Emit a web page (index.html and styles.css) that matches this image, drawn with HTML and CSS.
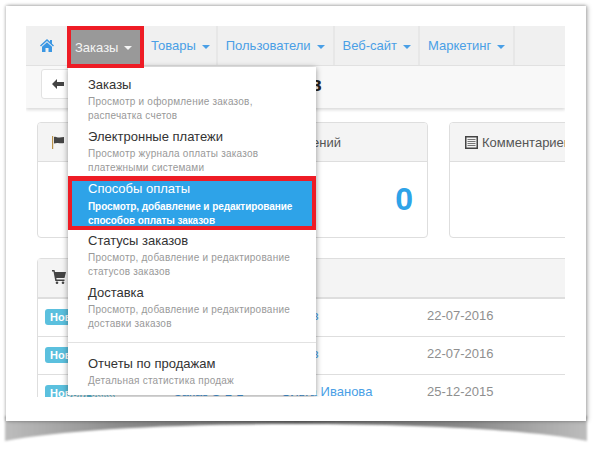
FILE: index.html
```html
<!DOCTYPE html>
<html lang="ru">
<head>
<meta charset="utf-8">
<title>Заказы</title>
<link rel="stylesheet" href="styles.css">
</head>
<body>
<svg class="curl" width="600" height="450" viewBox="0 0 600 450" aria-hidden="true">
  <defs>
    <filter id="soft" x="-5%" y="-20%" width="110%" height="140%"><feGaussianBlur stdDeviation="1.2"/></filter>
    <linearGradient id="fade" x1="0" y1="0" x2="1" y2="0">
      <stop offset="0" stop-color="#bdbdbd"/>
      <stop offset="0.2" stop-color="#8c8c8c"/>
      <stop offset="0.5" stop-color="#666"/>
      <stop offset="0.8" stop-color="#8c8c8c"/>
      <stop offset="1" stop-color="#bdbdbd"/>
    </linearGradient>
  </defs>
  <path d="M5 416 L5 441 C60 430 170 424 296 424 C422 424 532 430 587 441 L587 416 Z" fill="url(#fade)" filter="url(#soft)"/>
</svg>
<main class="sheet">
  <div class="view">
    <nav class="nav">
      <a class="nav-item nav-home"><svg width="14" height="13" viewBox="0 0 14 13"><path d="M7 0 L10 2.800 V1 H12 V4.700 L14 6.600 L13 7.600 L7 2 L1 7.600 L0 6.600 Z M7 3.200 L12 7.800 V13 H8.500 V9 H5.500 V13 H2 V7.800 Z" fill="#3b97e3"/></svg></a>
      <a class="nav-item nav-active">Заказы <i class="caret"></i></a>
      <a class="nav-item nav-first">Товары <i class="caret"></i></a>
      <a class="nav-item">Пользователи <i class="caret"></i></a>
      <a class="nav-item nav-tight">Веб-сайт <i class="caret"></i></a>
      <a class="nav-item">Маркетинг <i class="caret"></i></a>
    </nav>
    <div class="subbar">
      <a class="back"><svg width="12" height="10" viewBox="0 0 12 10"><path d="M5 0 V3 H12 V7 H5 V10 L0 5 Z" fill="#444"/></svg></a>
      <h1 class="title">Список заказов</h1>
    </div>
    <div class="content">
      <section class="cards">
        <article class="card card-wide">
          <header class="card-head"><svg class="ico" width="12" height="13" viewBox="0 0 12 13"><path d="M0 0 H1.200 V13 H0 Z" fill="#b8914a"/><path d="M2 1 C4 0 5.500 2 7.500 1.500 L12 1 V7 C9 8 7 6.500 5 7 L2 7.500 Z" fill="#444"/></svg><span class="card-label">Заказов с утверждением и новых сообщений</span></header>
          <div class="card-body"><span class="count">0</span></div>
        </article>
        <article class="card card-side">
          <header class="card-head"><svg class="ico" width="13" height="13" viewBox="0 0 13 13"><path fill-rule="evenodd" d="M0 0 H13 V13 H0 Z M1.500 1.500 V11.500 H11.500 V1.500 Z" fill="#444"/><path d="M2.500 3 H10.500 V4 H2.500 Z M2.500 5 H10.500 V6 H2.500 Z M2.500 7 H10.500 V8 H2.500 Z M2.500 9 H10.500 V10 H2.500 Z" fill="#777"/></svg><span class="card-label">Комментариев к заказам</span></header>
          <div class="card-body"></div>
        </article>
      </section>
      <section class="orders">
        <header class="orders-head"><svg class="ico" width="14" height="14" viewBox="0 0 14 14"><path d="M0 0 H2.500 L3 2 H14 L12.500 8 H4.300 L4.600 9.500 H12.500 V11 H3.300 L1.500 1.500 H0 Z" fill="#444"/><circle cx="5" cy="12.700" r="1.300" fill="#444"/><circle cx="11" cy="12.700" r="1.300" fill="#444"/></svg></header>
        <div class="row"><span class="badge">Новый заказ</span><a class="link order">Заказ S-1-3</a><a class="link person">Попов</a><span class="date">22-07-2016</span></div>
        <div class="row"><span class="badge">Новый заказ</span><a class="link order">Заказ S-1-2</a><a class="link person">Попов</a><span class="date">22-07-2016</span></div>
        <div class="row"><span class="badge">Новый заказ</span><a class="link order">Заказ S-1-1</a><a class="link person">Ольга Иванова</a><span class="date">25-12-2015</span></div>
      </section>
    </div>
    <ul class="menu">
      <li class="menu-item"><b class="menu-title">Заказы</b><small class="menu-desc">Просмотр и оформление заказов, распечатка счетов</small></li>
      <li class="menu-item"><b class="menu-title">Электронные платежи</b><small class="menu-desc">Просмотр журнала оплаты заказов платежными системами</small></li>
      <li class="menu-item menu-active"><b class="menu-title">Способы оплаты</b><small class="menu-desc">Просмотр, добавление и редактирование способов оплаты заказов</small></li>
      <li class="menu-item"><b class="menu-title">Статусы заказов</b><small class="menu-desc">Просмотр, добавление и редактирование статусов заказов</small></li>
      <li class="menu-item"><b class="menu-title">Доставка</b><small class="menu-desc">Просмотр, добавление и редактирование доставки заказов</small></li>
      <li class="menu-divider"></li>
      <li class="menu-item"><b class="menu-title">Отчеты по продажам</b><small class="menu-desc">Детальная статистика продаж</small></li>
    </ul>
  </div>
</main>
</body>
</html>
```
FILE: styles.css
```css
* { box-sizing: border-box; }
html, body { margin: 0; padding: 0; }
body {
  width: 600px;
  height: 450px;
  overflow: hidden;
  background: #fff;
  font-family: "Liberation Sans", Arial, sans-serif;
  font-size: 13px;
  color: #555;
  position: relative;
}
.curl { position: absolute; left: 0; top: 0; }
.sheet {
  position: relative;
  margin: 6px 0 0 6px;
  width: 580px;
  height: 415px;
  padding: 20px 21px 0 20px;
  background: #fff;
  box-shadow: 2px 0 4px rgba(0, 0, 0, .25), -1px 0 3px rgba(0, 0, 0, .15), 0 -1px 3px rgba(0, 0, 0, .12);
}
.view {
  position: relative;
  width: 539px;
  height: 371px;
  overflow: hidden;
}
.nav {
  display: flex;
  height: 40px;
  background: #f0f0f0;
  border-bottom: 1px solid #e2e2e2;
}
.nav-item {
  display: flex;
  align-items: center;
  gap: 6px;
  padding: 0 8px;
  color: #4a9fe6;
  border-right: 2px solid #e7e7e7;
}
.nav-first { padding: 0 6px 0 7px; }
.nav-tight { padding-right: 7px; }
.nav-home { width: 41px; padding: 0 0 0 14px; border-right: 0; }
.nav-active {
  width: 77px;
  height: 42px;
  padding: 0 0 0 4px;
  background: #999;
  color: #f4f4f4;
  border: 4px solid #ee1c25;
  flex: none;
  position: relative;
  z-index: 3;
}
.caret {
  width: 0;
  height: 0;
  margin-top: 2px;
  border-left: 4px solid transparent;
  border-right: 4px solid transparent;
  border-top: 4px solid currentColor;
}
.subbar {
  display: flex;
  align-items: center;
  height: 42px;
  padding: 0 0 6px 15px;
  background: #f8f8f8;
  box-shadow: 0 2px 3px rgba(0, 0, 0, .14);
  position: relative;
}
.back {
  display: flex;
  align-items: center;
  flex: none;
  width: 60px;
  height: 30px;
  padding-left: 10px;
  background: #fff;
  border: 1px solid #e2e2e2;
  border-radius: 3px;
}
.title {
  margin: 0 0 0 67px;
  font-size: 20px;
  font-weight: 700;
  color: #222;
  white-space: nowrap;
}
.content { padding: 14px 0 0 11px; width: 720px; }
.cards { display: flex; gap: 21px; }
.card {
  flex: none;
  height: 116px;
  background: #fff;
  border: 1px solid #dedede;
  border-radius: 4px;
  overflow: hidden;
}
.card-wide { width: 391px; }
.card-side { width: 300px; }
.card-head {
  display: flex;
  align-items: center;
  gap: 4px;
  height: 39px;
  padding: 0 0 0 15px;
  background: #f4f4f4;
  border-bottom: 1px solid #dedede;
  white-space: nowrap;
}
.card-wide .card-head { padding-left: 14px; }
.card-body {
  display: flex;
  justify-content: flex-end;
  align-items: center;
  height: 75px;
  padding: 0 14px 2px 0;
}
.count { font-size: 32px; line-height: 36px; font-weight: 700; color: #2ea3e8; }
.orders {
  margin-top: 20px;
  width: 700px;
  background: #fff;
  border: 1px solid #dedede;
  border-radius: 4px 0 0 0;
}
.orders-head {
  display: flex;
  align-items: center;
  height: 40px;
  padding: 0 0 2px 14px;
  background: #f4f4f4;
  border-bottom: 2px solid #dedede;
}
.row {
  display: grid;
  grid-template-columns: 129px 107px 146px 1fr;
  align-items: start;
  height: 38px;
  padding: 7px 0 0 7px;
  line-height: 20px;
  border-bottom: 1px solid #dedede;
}
.badge {
  width: 70px;
  height: 16px;
  margin-top: 3px;
  padding-left: 5px;
  background: #5bc0de;
  color: #fff;
  font-size: 11px;
  font-weight: 700;
  line-height: 16px;
  border-radius: 3px;
  white-space: nowrap;
  overflow: hidden;
}
.link { color: #4a9fe6; white-space: nowrap; }
.date { color: #8f8f8f; }
.menu {
  position: absolute;
  z-index: 2;
  left: 42px;
  top: 41px;
  width: 248px;
  height: 328px;
  margin: 0;
  padding: 5px 0 0;
  list-style: none;
  background: #fff;
  box-shadow: 0 1px 6px rgba(0, 0, 0, .4);
}
.menu-item {
  display: block;
  height: 52px;
  padding: 3px 8px 0 20px;
}
.menu-title {
  display: block;
  height: 20px;
  font-weight: 400;
  font-size: 13px;
  line-height: 20px;
  color: #333;
}
.menu-desc {
  display: block;
  width: 220px;
  font-size: 10px;
  line-height: 14px;
  letter-spacing: .23px;
  color: #999;
}
.menu-active {
  height: 54px;
  margin-bottom: -2px;
  padding: 0 5px 0 16px;
  background: #2ea3e8;
  border: 4px solid #ee1c25;
  border-top-width: 5px;
}
.menu-active .menu-title,
.menu-active .menu-desc { color: #fff; }
.menu-active .menu-title { height: 18px; margin: -1px 0 2px; line-height: 18px; }
.menu-active .menu-desc { font-weight: 700; letter-spacing: -.08px; }
.menu-divider {
  height: 1px;
  margin: 10px 0 8px;
  background: #e2e2e2;
}
```
